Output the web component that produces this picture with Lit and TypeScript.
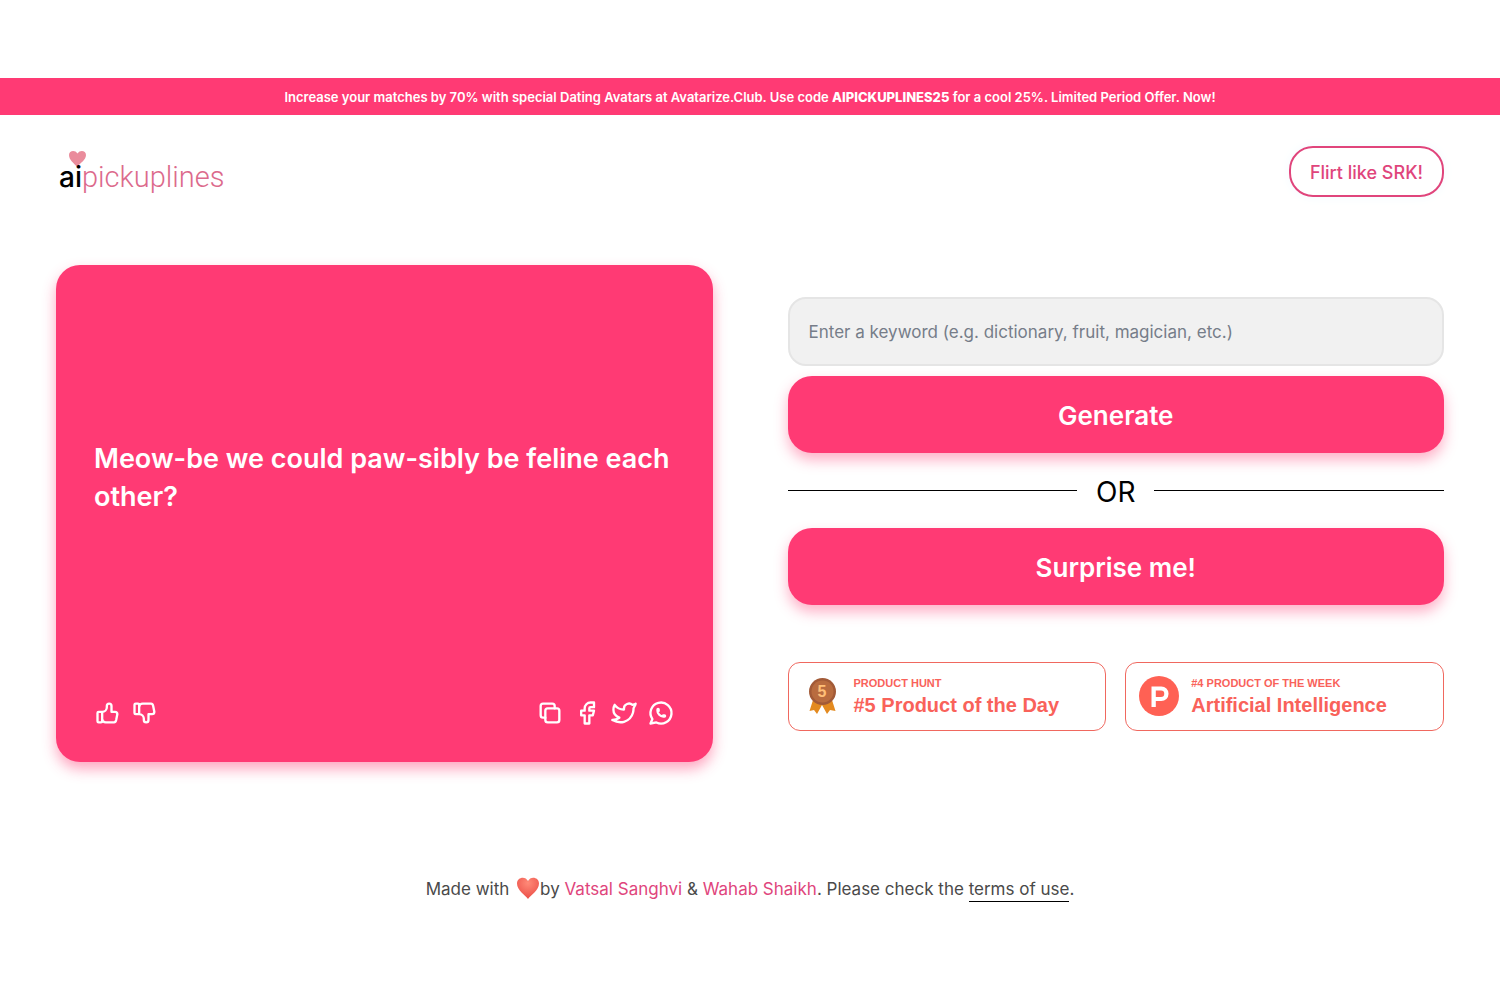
import { LitElement, html, css, svg, type TemplateResult } from "lit";
import { customElement, property, state } from "lit/decorators.js";

const ICONS: Record<string, TemplateResult> = {
  like: svg`<path d="M7 11v8a1 1 0 0 1-1 1H4a1 1 0 0 1-1-1v-7a1 1 0 0 1 1-1h3a4 4 0 0 0 4-4V6a2 2 0 0 1 4 0v5h3a2 2 0 0 1 2 2l-1 5a2 3 0 0 1-2 2h-7a3 3 0 0 1-3-3"/>`,
  dislike: svg`<path d="M7 13V5a1 1 0 0 0-1-1H4a1 1 0 0 0-1 1v7a1 1 0 0 0 1 1h3a4 4 0 0 1 4 4v1a2 2 0 0 0 4 0v-5h3a2 2 0 0 0 2-2l-1-5a2 3 0 0 0-2-2h-7a3 3 0 0 0-3 3"/>`,
  copy: svg`<rect x="8" y="8" width="12" height="12" rx="2"/><path d="M16 8V6a2 2 0 0 0-2-2H6a2 2 0 0 0-2 2v8a2 2 0 0 0 2 2h2"/>`,
  facebook: svg`<path d="M7 10v4h3v7h4v-7h3l1-4h-4V8a1 1 0 0 1 1-1h3V3h-3a5 5 0 0 0-5 5v2H7"/>`,
  twitter: svg`<path d="M22 4.01c-1 .49-1.98.689-3 .99-1.121-1.265-2.783-1.335-4.38-.737S11.977 6.323 12 8v1c-3.245.083-6.135-1.395-8-4 0 0-4.182 7.433 4 11-1.872 1.247-3.739 2.088-6 2 3.308 1.803 6.913 2.423 10.034 1.517 3.58-1.04 6.522-3.723 7.651-7.742a13.84 13.84 0 0 0 .497-3.753C20.18 7.773 21.692 5.25 22 4.009z"/>`,
  whatsapp: svg`<path d="M3 21l1.65-3.8a9 9 0 1 1 3.4 2.9L3 21"/><path d="M9 10a.5.5 0 0 0 1 0V9a.5.5 0 0 0-1 0v1a5 5 0 0 0 5 5h1a.5.5 0 0 0 0-1h-1a.5.5 0 0 0 0 1"/>`,
};

@customElement("icon-button")
class IconButton extends LitElement {
  @property() icon = "";
  @property() label = "";

  static styles = css`
    :host { display: block; }
    .btn { display: block; padding: 0; border: 0; background: none; color: #fff; cursor: pointer; }
    .glyph { display: block; width: 28px; height: 28px; }
  `;

  render() {
    return html`<button class="btn" type="button" aria-label=${this.label}>
      <svg class="glyph" viewBox="0 0 24 24" fill="none" stroke="currentColor" stroke-width="2"
        stroke-linecap="round" stroke-linejoin="round" aria-hidden="true">${ICONS[this.icon]}</svg>
    </button>`;
  }
}

@customElement("app-root")
class AppRoot extends LitElement {
  @state() private line = "Meow-be we could paw-sibly be feline each other?";

  static styles = css`
    :host {
      display: block;
      padding: 78px 0;
      font-family: Inter, "Liberation Sans", sans-serif;
      color: #000;
      background: #fff;
    }
    * { box-sizing: border-box; }
    a { color: inherit; text-decoration: none; }
    .banner {
      display: flex; justify-content: center; align-items: center;
      min-height: 37px; padding: 9px 16px 8px;
      background: #ff3a74; color: #fff;
      font-size: 13px; line-height: 20px; font-weight: 600; text-align: center;
    }
    .banner strong { font-weight: 800; }
    .header { display: flex; justify-content: space-between; align-items: center; padding: 31px 56px 0; }
    .logo { display: block; width: 168px; height: 50px; }
    .logo-ai { font: 500 28px Inter, sans-serif; fill: #000; }
    .logo-rest { font: 300 29px Roboto, sans-serif; fill: #dc6a8c; }
    .pill {
      min-height: 51px; padding: 2px 19px 0;
      border: 2px solid #e0457c; border-radius: 24px;
      display: flex; align-items: center;
      font-size: 18px; line-height: 24px; font-weight: 500; color: #e0457c;
      box-shadow: 0 0 12px #f3faff;
    }
    .main {
      display: grid; grid-template-columns: 1fr 1fr; gap: 75px; align-items: center;
      padding: 68px 56px 0;
    }
    .card {
      display: flex; flex-direction: column;
      min-height: 497px; padding: 35px 38px;
      border-radius: 24px; background: #ff3a74; color: #fff;
      box-shadow: 0 7px 14px rgba(255, 58, 116, 0.45);
    }
    .line { margin: auto 0; font-size: 27px; line-height: 38px; font-weight: 600; }
    .actions { display: flex; justify-content: space-between; margin-top: 43px; }
    .group { display: flex; gap: 9px; }
    .form { display: flex; flex-direction: column; margin: 0; }
    .keyword {
      width: 100%; height: 69px; padding: 2px 19px 0; margin-bottom: 10px;
      border: 2px solid #e5e5e5; border-radius: 18px; background: #f1f1f1;
      font-family: inherit; font-size: 17px; color: #111;
    }
    .keyword::placeholder { color: #767d89; opacity: 1; }
    .primary {
      height: 77px; border: 0; border-radius: 24px; padding: 3px 24px 0;
      background: #ff3a74; color: #fff; cursor: pointer;
      font-family: inherit; font-size: 26px; font-weight: 600;
      box-shadow: 0 7px 14px rgba(255, 58, 116, 0.4);
    }
    .or { display: flex; align-items: center; gap: 19px; height: 75px; font-size: 28px; line-height: 38px; }
    .or-text { padding-top: 3px; }
    .rule { flex: 1; height: 1px; background: #000; }
    .badges { display: grid; grid-template-columns: 1fr 1fr; gap: 19px; margin-top: 57px; }
    .badge {
      display: flex; align-items: center; gap: 12px;
      height: 69px; padding: 0 13px;
      border: 1px solid #f0685f; border-radius: 12px; color: #f9625a;
      font-family: "Liberation Sans", Arial, sans-serif; font-weight: 700;
    }
    .badge-icon { display: block; flex: none; width: 40px; height: 40px; }
    .badge-text { display: flex; flex-direction: column; }
    .badge-small { font-size: 11px; line-height: 18px; }
    .badge-big { font-size: 20px; line-height: 26px; }
    .medal-num { font: 700 16px "Liberation Sans", sans-serif; fill: #ffbf78; }
    .footer { padding: 113px 56px 0; text-align: center; font-size: 17px; line-height: 28px; color: #4a4a4a; }
    .heart { width: 24px; height: 24px; vertical-align: -5px; margin-left: 2px; }
    .author { color: #e0457c; }
    .terms { border-bottom: 1px solid #000; padding-bottom: 2px; }
  `;

  render() {
    return html`
      <div class="banner">
        <span>Increase your matches by 70% with special Dating Avatars at Avatarize.Club. Use code
          <strong>AIPICKUPLINES25</strong> for a cool 25%. Limited Period Offer. Now!</span>
      </div>
      <header class="header">
        <a href="#" aria-label="aipickuplines">
          <svg class="logo" viewBox="0 0 168 50">
            <path d="M21 20C18 16 13 13 13 8C13 3.500 19 2.500 21.500 6.500C24 2.500 30 3.500 30 8C30 13 24 16 21 20Z" fill="#ea8c9c"/>
            <text class="logo-ai" x="3" y="40">ai</text>
            <text class="logo-rest" x="26" y="40">pickuplines</text>
          </svg>
        </a>
        <a class="pill" href="#srk">Flirt like SRK!</a>
      </header>
      <main class="main">
        <section class="card">
          <p class="line">${this.line}</p>
          <div class="actions">
            <div class="group">
              <icon-button icon="like" label="Like"></icon-button>
              <icon-button icon="dislike" label="Dislike"></icon-button>
            </div>
            <div class="group">
              <icon-button icon="copy" label="Copy"></icon-button>
              <icon-button icon="facebook" label="Facebook"></icon-button>
              <icon-button icon="twitter" label="Twitter"></icon-button>
              <icon-button icon="whatsapp" label="WhatsApp"></icon-button>
            </div>
          </div>
        </section>
        <section>
          <form class="form" @submit=${(e: Event) => e.preventDefault()}>
            <input class="keyword" type="text" aria-label="Keyword"
              placeholder="Enter a keyword (e.g. dictionary, fruit, magician, etc.)" />
            <button class="primary" type="submit">Generate</button>
            <div class="or"><span class="rule"></span><span class="or-text">OR</span><span class="rule"></span></div>
            <button class="primary" type="button">Surprise me!</button>
          </form>
          <div class="badges">
            <a class="badge" href="#day">
              <svg class="badge-icon" viewBox="0 0 40 40" aria-hidden="true">
                <path d="M11 24L7.500 35L12 34L15 38L20 29L25 38L28 34L33.500 35L30 24Z" fill="#e38a1f"/>
                <circle cx="20.500" cy="15.500" r="13.500" fill="#a25a37"/>
                <circle cx="20.500" cy="15.500" r="11" fill="#b96c3f"/>
                <text class="medal-num" x="20" y="21" text-anchor="middle">5</text>
              </svg>
              <span class="badge-text">
                <span class="badge-small">PRODUCT HUNT</span>
                <span class="badge-big">#5 Product of the Day</span>
              </span>
            </a>
            <a class="badge" href="#week">
              <svg class="badge-icon" viewBox="0 0 40 40" aria-hidden="true">
                <circle cx="20" cy="20" r="20" fill="#ff6154"/>
                <path fill-rule="evenodd" d="M12.500 10.500H22.300A7 7 0 0 1 22.300 25H16.800V31H12.500ZM16.800 14.500V21H22A3.200 3.200 0 0 0 22 14.500Z" fill="#fff"/>
              </svg>
              <span class="badge-text">
                <span class="badge-small">#4 PRODUCT OF THE WEEK</span>
                <span class="badge-big">Artificial Intelligence</span>
              </span>
            </a>
          </div>
        </section>
      </main>
      <footer class="footer">
        Made with <svg class="heart" viewBox="0 0 24 24" role="img" aria-label="love">
          <defs><radialGradient id="hg" cx="0.5" cy="0.25" r="0.8">
            <stop offset="0" stop-color="#ff8a78"/><stop offset="1" stop-color="#ea4a44"/>
          </radialGradient></defs>
          <path d="M12 23C9.500 19 1 14.500 1 7.500C1 1 9.500 -0.500 12 5C14.500 -0.500 23 1 23 7.500C23 14.500 14.500 19 12 23Z" fill="url(#hg)"/>
        </svg>by <a class="author" href="#vatsal">Vatsal Sanghvi</a> &amp; <a class="author" href="#wahab">Wahab Shaikh</a>. Please check the <a class="terms" href="#terms">terms of use</a>.
      </footer>
    `;
  }
}
